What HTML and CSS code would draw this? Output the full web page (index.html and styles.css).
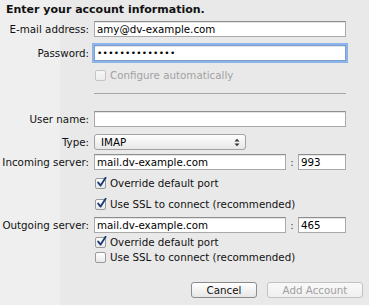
FILE: index.html
```html
<!DOCTYPE html>
<html>
<head>
<meta charset="utf-8">
<link rel="stylesheet" href="styles.css">
</head>
<body>
<div class="sheet">
  <div class="title">Enter your account information.</div>

  <div class="row r-email">
    <label class="lbl">E-mail address:</label>
    <div class="field wide">amy@dv-example.com</div>
  </div>

  <div class="row r-pass">
    <label class="lbl">Password:</label>
    <div class="field wide focus">&#8226;&#8226;&#8226;&#8226;&#8226;&#8226;&#8226;&#8226;&#8226;&#8226;&#8226;&#8226;&#8226;&#8226;</div>
  </div>

  <div class="row check r-conf">
    <span></span>
    <div class="cb disabled"><span class="box"></span><span>Configure automatically</span></div>
  </div>

  <div class="row r-sep">
    <span></span>
    <div class="sep"></div>
  </div>

  <div class="row r-user">
    <label class="lbl">User name:</label>
    <div class="field wide"></div>
  </div>

  <div class="row r-type">
    <label class="lbl">Type:</label>
    <div class="popup"><span>IMAP</span>
      <svg class="arrows" width="6" height="9" viewBox="0 0 6 9"><path d="M0.5 3.5 L3 0.8 L5.5 3.5 Z M0.5 5.5 L3 8.2 L5.5 5.5 Z" fill="#333"/></svg>
    </div>
  </div>

  <div class="row r-in">
    <label class="lbl">Incoming server:</label>
    <div class="server">
      <div class="field host">mail.dv-example.com</div>
      <span class="colon">:</span>
      <div class="field port">993</div>
    </div>
  </div>

  <div class="row check r-ov1">
    <span></span>
    <div class="cb"><span class="box on"><svg width="11" height="11" viewBox="0 0 11 11"><path d="M2.2 5.6 L4.6 8.6 L9.6 0.8" fill="none" stroke="#1d3d78" stroke-width="1.9" stroke-linecap="round" stroke-linejoin="round"/></svg></span><span>Override default port</span></div>
  </div>

  <div class="row check r-ssl1">
    <span></span>
    <div class="cb"><span class="box on"><svg width="11" height="11" viewBox="0 0 11 11"><path d="M2.2 5.6 L4.6 8.6 L9.6 0.8" fill="none" stroke="#1d3d78" stroke-width="1.9" stroke-linecap="round" stroke-linejoin="round"/></svg></span><span>Use SSL to connect (recommended)</span></div>
  </div>

  <div class="row r-out">
    <label class="lbl">Outgoing server:</label>
    <div class="server">
      <div class="field host">mail.dv-example.com</div>
      <span class="colon">:</span>
      <div class="field port">465</div>
    </div>
  </div>

  <div class="row check r-ov2">
    <span></span>
    <div class="cb"><span class="box on"><svg width="11" height="11" viewBox="0 0 11 11"><path d="M2.2 5.6 L4.6 8.6 L9.6 0.8" fill="none" stroke="#1d3d78" stroke-width="1.9" stroke-linecap="round" stroke-linejoin="round"/></svg></span><span>Override default port</span></div>
  </div>

  <div class="row check r-ssl2">
    <span></span>
    <div class="cb"><span class="box"></span><span>Use SSL to connect (recommended)</span></div>
  </div>

  <div class="buttons">
    <button class="btn">Cancel</button>
    <button class="btn dim">Add Account</button>
  </div>
</div>
</body>
</html>
```

FILE: styles.css
```css
* { box-sizing: border-box; }
html, body { margin: 0; padding: 0; }
body {
  width: 369px;
  height: 305px;
  overflow: hidden;
  background: linear-gradient(to right, #efefef 0, #efefef 60px, #e9e9e9 60px, #e9e9e9 100%);
  font-family: "DejaVu Sans", sans-serif;
  font-size: 10.3px;
  color: #111;
}
.sheet {
  display: flex;
  flex-direction: column;
  padding-top: 3px;
}
.title {
  font-weight: bold;
  font-size: 11px;
  line-height: 14px;
  height: 14px;
  padding-left: 6px;
}
.row {
  display: grid;
  grid-template-columns: 89px 252px;
  column-gap: 5px;
  align-items: center;
}
.lbl {
  text-align: right;
  white-space: nowrap;
  line-height: 16px;
}
.field {
  height: 16px;
  line-height: 14px;
  background: #fff;
  border: 1px solid #a9a9a9;
  border-top-color: #8e8e8e;
  box-shadow: inset 0 1px 0 #e4e4e4;
  padding: 0 2px;
  white-space: nowrap;
  overflow: hidden;
  color: #000;
}
.field.focus {
  border-color: #7b9fd0;
  box-shadow: 0 0 0 2px #8cb4e8, inset 0 1px 0 #e4e4e4;
  letter-spacing: 0.3px;
  font-size: 9px;
}
.r-email { margin-top: 4px; }
.r-pass { margin-top: 8px; }
.check { height: 14px; }
.r-conf { margin-top: 7px; }
.r-sep { margin-top: 11px; }
.sep { height: 1px; background: #a8a8a8; }
.r-user { margin-top: 17px; }
.r-type { margin-top: 7px; }
.r-in { margin-top: 4px; }
.r-ov1 { margin-top: 6px; }
.r-ssl1 { margin-top: 7px; }
.r-out { margin-top: 6px; }
.r-ov2 { margin-top: 2px; }
.r-ssl2 { margin-top: 1px; }

.cb {
  display: flex;
  align-items: center;
  gap: 4px;
  white-space: nowrap;
  line-height: 14px;
  margin-left: 1px;
}
.cb .box {
  width: 11px;
  height: 11px;
  border: 1px solid #9a9a9a;
  border-radius: 2px;
  background: linear-gradient(#ffffff, #e9e9e9);
  position: relative;
  flex: none;
}
.cb .box svg {
  position: absolute;
  left: 0;
  top: -2px;
}
.cb.disabled { color: #a2a2a2; }
.cb.disabled .box { border-color: #c4c4c4; background: linear-gradient(#f7f7f7, #ececec); }

.popup {
  width: 152px;
  height: 16px;
  border: 1px solid #a2a2a2;
  border-radius: 3px;
  background: linear-gradient(#ffffff, #f2f2f2 50%, #e8e8e8);
  display: flex;
  align-items: center;
  justify-content: space-between;
  padding: 0 5px 0 6px;
  line-height: 14px;
  color: #000;
}
.popup .arrows { flex: none; }

.server {
  display: flex;
  align-items: center;
}
.host { width: 192px; }
.colon { width: 12px; text-align: center; color: #444; }
.port { width: 48px; }

.buttons {
  display: flex;
  justify-content: flex-end;
  gap: 10px;
  padding-right: 6px;
  margin-top: 18px;
}
.btn {
  font-family: "DejaVu Sans", sans-serif;
  font-size: 10.3px;
  height: 16px;
  line-height: 14px;
  padding: 0;
  border: 1px solid #8c8c8c;
  border-radius: 3px;
  background: linear-gradient(#ffffff, #f3f3f3 50%, #e6e6e6);
  color: #111;
  width: 66px;
}
.btn.dim {
  width: 96px;
  color: #a0a0a0;
  border-color: #c2c2c2;
  background: linear-gradient(#f9f9f9, #efefef);
}
```
